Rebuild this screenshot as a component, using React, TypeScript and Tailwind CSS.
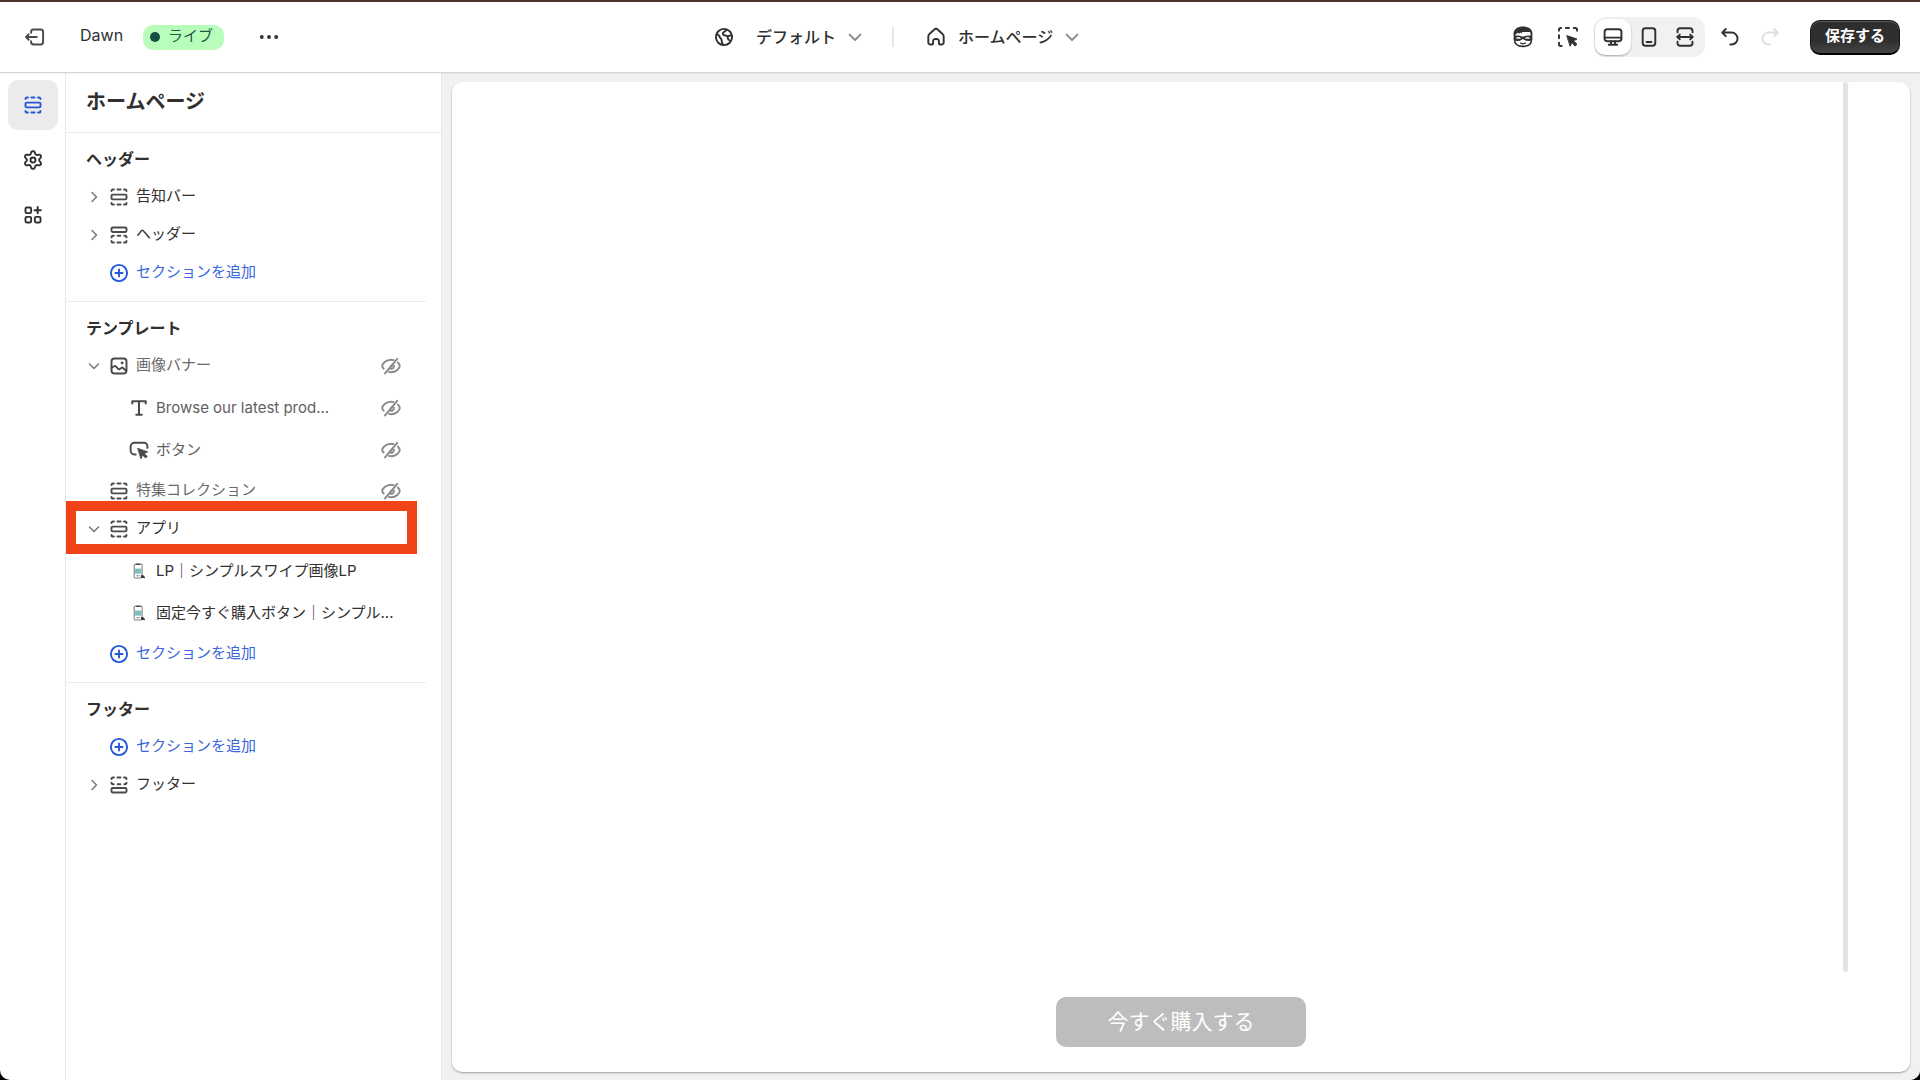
import type { ReactNode } from "react";

type IconProps = { className?: string };

function Svg({ className = "size-6", children }: { className?: string; children: ReactNode }) {
  return (
    <svg
      viewBox="0 0 20 20"
      className={className}
      fill="none"
      stroke="currentColor"
      strokeWidth="1.6"
      strokeLinecap="round"
      strokeLinejoin="round"
      aria-hidden="true"
    >
      {children}
    </svg>
  );
}

const ExitIcon = () => (
  <Svg>
    <path d="M6.75 6.5v-.75a2 2 0 0 1 2-2h6a2 2 0 0 1 2 2v8.5a2 2 0 0 1-2 2h-6a2 2 0 0 1-2-2v-.75" />
    <path d="M11.5 10H2.5M4.75 7.75 2.5 10l2.25 2.25" />
  </Svg>
);

const DotsIcon = () => (
  <Svg>
    <g fill="currentColor" stroke="none">
      <circle cx="4" cy="10" r="1.6" />
      <circle cx="10" cy="10" r="1.6" />
      <circle cx="16" cy="10" r="1.6" />
    </g>
  </Svg>
);

const GlobeIcon = () => (
  <Svg>
    <circle cx="10" cy="10" r="6.75" />
    <path d="M3.8 7.8c1.500.2 2.300 1 2.500 2 .2 1 1.500 1.400 1.600 2.400.1 1.200.300 2.600 1.200 4.200" />
    <path d="M12.500 3.900 9.700 6c-.8.700-.8 1.900.1 2.400.9.500 1.800.2 2.600.6 1 .500.6 1.500.8 2.300.2.900 1 1.300 1.700 1.700M13.300 9.300l3-.8" />
  </Svg>
);

const HomeIcon = () => (
  <Svg>
    <path d="M3.600 9.500c0-.8.300-1.500.9-2l3.900-3.600a2.300 2.300 0 0 1 3.200 0l3.900 3.600c.6.500.9 1.200.9 2v5a1.750 1.750 0 0 1-1.750 1.750h-1.300a.9.9 0 0 1-.9-.9V13.500a1.800 1.800 0 0 0-1.800-1.800h-1.300a1.800 1.800 0 0 0-1.800 1.800v1.850a.9.900 0 0 1-.9.9h-1.300A1.750 1.750 0 0 1 3.600 14.500z" />
  </Svg>
);

const ChevronDown = ({ className }: IconProps) => (
  <Svg className={className}>
    <path d="m5.500 8 4.500 4.500L14.500 8" />
  </Svg>
);

const SidekickIcon = () => (
  <Svg>
    <path d="M3 8v4.500c0 3.200 2.300 5.300 7 5.300s7-2.100 7-5.300V8" strokeWidth="1.300" />
    <path
      d="M2.300 8.600C1.300 4 5 1.200 10 1.200s8.700 2.800 7.700 7.400L16.400 8l-.5-2.200-6.400.1-1.100 1.400-.5-1.300-1.300 1.500-.6-1.300L3.800 8z"
      fill="currentColor"
      stroke="none"
    />
    <path
      d="M2.300 8.800c2.900-.3 5.500 0 7.700 1 2.200-1 4.800-1.300 7.700-1v4c-3 1.100-5.600.6-7.700-1.100-2.100 1.700-4.700 2.200-7.700 1.100z"
      fill="currentColor"
      stroke="none"
    />
    <path d="M5 10.900c.8-.4 1.600-.4 2.400 0M12.600 10.900c.8-.4 1.600-.4 2.400 0" stroke="white" strokeWidth="1.300" />
    <path d="M8 15c1.200.7 2.800.7 4 0" strokeWidth="1.200" />
  </Svg>
);

const InspectorIcon = () => (
  <Svg>
    <path d="M2.500 4.700V4c0-.9.600-1.500 1.500-1.500h.3M8.200 2.500h2.600M14.800 2.500h1.200c.9 0 1.500.6 1.500 1.500v.7M2.500 8.500V11M2.500 14.700V16c0 .9.600 1.500 1.500 1.500h.7" />
    <path d="m9.200 8.900 8.300 2.800-3 1.500 3 2.900-1.500 1.500-2.900-3-1.200 2.800z" fill="currentColor" strokeWidth=".8" />
  </Svg>
);

const DesktopIcon = () => (
  <Svg>
    <rect x="3" y="3.500" width="14" height="10" rx="2.200" />
    <path d="M3 10.500h14M8.300 13.500v2.300M11.700 13.500v2.300M6.500 16.500h7" />
  </Svg>
);

const MobileIcon = () => (
  <Svg>
    <rect x="4.750" y="2.750" width="10.500" height="14.500" rx="2.250" />
    <path d="M8 14.200h4" />
  </Svg>
);

const FullWidthIcon = () => (
  <Svg>
    <path d="M3.750 6V5A2.250 2.250 0 0 1 6 2.750h8A2.250 2.250 0 0 1 16.250 5v1M3.750 14v1A2.250 2.250 0 0 0 6 17.250h8A2.250 2.250 0 0 0 16.250 15v-1" />
    <path d="M3.500 10h13M5.700 8l-2.200 2 2.200 2M14.300 8l2.200 2-2.200 2" />
  </Svg>
);

const UndoIcon = ({ className }: IconProps) => (
  <Svg className={className}>
    <path d="M6.500 3.300 3.500 6.300l3 3M3.700 6.300h7.600a5 5 0 0 1 0 10h-1" />
  </Svg>
);

const DashedTop = () => (
  <path d="M3.750 5.100c0-.8.600-1.350 1.350-1.350h.7M8.700 3.750h2.600M14.200 3.750h.7c.8 0 1.350.55 1.350 1.350" />
);
const DashedBottom = () => (
  <path d="M3.750 14.900c0 .8.600 1.350 1.350 1.350h.7M8.700 16.250h2.600M14.200 16.250h.7c.8 0 1.350-.55 1.350-1.350" />
);

const SectionIcon = () => (
  <Svg>
    <DashedTop />
    <rect x="3.750" y="8" width="12.500" height="4" rx="1" />
    <DashedBottom />
  </Svg>
);

const HeaderIcon = () => (
  <Svg>
    <rect x="3.750" y="3.750" width="12.500" height="3.800" rx="1" />
    <path d="M3.750 12c0-.8.600-1.350 1.350-1.350h.5M8.900 10.650h2.200M14.400 10.650h.5c.8 0 1.350.55 1.350 1.350" />
    <DashedBottom />
  </Svg>
);

const FooterIcon = () => (
  <Svg>
    <DashedTop />
    <path d="M3.750 8c0 .8.600 1.350 1.350 1.350h.5M8.900 9.350h2.200M14.400 9.350h.5c.8 0 1.350-.55 1.350-1.350" />
    <rect x="3.750" y="12.450" width="12.500" height="3.800" rx="1" />
  </Svg>
);

const gearOutline =
  Array.from({ length: 120 }, (_, i) => {
    const angle = (i / 120) * 2 * Math.PI;
    const radius = 6.25 + 1.3 * Math.tanh(1.3 * Math.cos(6 * angle));
    const x = 10 + radius * Math.sin(angle);
    const y = 10 - radius * Math.cos(angle);
    return `${i === 0 ? "M" : "L"}${x.toFixed(2)} ${y.toFixed(2)}`;
  }).join("") + "Z";

const GearIcon = () => (
  <Svg>
    <circle cx="10" cy="10" r="2.100" />
    <path d={gearOutline} />
  </Svg>
);

const AppsIcon = () => (
  <Svg>
    <rect x="3.750" y="3.750" width="4.700" height="4.700" rx="1" />
    <rect x="3.750" y="11.550" width="4.700" height="4.700" rx="1" />
    <rect x="11.550" y="11.550" width="4.700" height="4.700" rx="1" />
    <path d="M13.900 3.400v5.200M11.300 6h5.200" />
  </Svg>
);

const PlusIcon = () => (
  <Svg>
    <circle cx="10" cy="10" r="6.750" />
    <path d="M10 7v6M7 10h6" />
  </Svg>
);

const ImageIcon = () => (
  <Svg>
    <rect x="3.750" y="3.750" width="12.500" height="12.500" rx="2.500" />
    <path d="m4 11.500 1.800-1.300c.5-.4 1.100-.3 1.500.1l2 2.100c.4.400 1 .4 1.400.1l1.200-.9c.5-.4 1.100-.3 1.500.1l2.500 2.200" />
    <circle cx="12.600" cy="7.400" r="1.200" fill="currentColor" stroke="none" />
  </Svg>
);

const TextIcon = () => (
  <Svg>
    <path d="M4.400 6.200V4.300h11.200v1.900M10 4.300v11.400M7.700 15.700h4.600" strokeWidth="1.700" />
  </Svg>
);

const ButtonIcon = () => (
  <Svg>
    <path d="M7.300 13.750H6.250A3.250 3.250 0 0 1 3 10.500V7.250A3.250 3.250 0 0 1 6.250 4h8A2.750 2.750 0 0 1 17 6.750v1.500" />
    <path d="m9.200 8.700 8 2.900-2.900 1.300 2.500 2.500-1.300 1.300-2.500-2.500-1.300 2.800z" fill="currentColor" strokeWidth=".8" />
  </Svg>
);

const EyeOffIcon = () => (
  <Svg>
    <path d="M15.200 4 5 16.200" />
    <path d="M3.900 12.200c-.8-.8-1.200-1.600-1.200-2.200 0-1.800 3-5.250 7.300-5.250.8 0 1.500.1 2.200.3M8.300 14.950c.6.200 1.100.3 1.700.3 4.300 0 7.300-3.450 7.300-5.250 0-.8-.6-1.900-1.600-2.900" />
    <path d="M9.400 12.300c1.700.3 3-.8 3.100-2.500M9.600 10.800l1.300-1.500" />
  </Svg>
);

const AppBlockIcon = () => (
  <svg viewBox="0 0 20 20" className="size-6" aria-hidden="true">
    <rect x="6" y="4.300" width="6.600" height="11.600" rx="1" fill="white" stroke="#7d8282" strokeWidth=".9" />
    <path d="M7.600 4.400H11" stroke="#333" strokeWidth=".9" />
    <rect x="6.700" y="8" width="5.200" height="4.200" fill="#7fbcbd" />
    <path d="M7.700 14h3" stroke="#888" strokeWidth=".8" />
    <circle cx="12.800" cy="14.600" r="1.200" fill="#26302f" />
    <path d="m13 15 1.900.5" stroke="#26302f" strokeWidth="1.300" />
  </svg>
);

function Row({
  icon,
  label,
  open,
  hidden,
  highlighted,
}: {
  icon: ReactNode;
  label: string;
  open?: boolean;
  hidden?: boolean;
  highlighted?: boolean;
}) {
  return (
    <div className="relative mr-[9px] flex h-[38px] items-center pr-3.5 pl-4">
      {open === undefined ? (
        <span className="w-6" />
      ) : (
        <button type="button" aria-label={`${label}を開閉`} aria-expanded={open} className="flex w-6 justify-center text-[#7c7c7c]">
          <ChevronDown className={open ? "size-5" : "size-5 -rotate-90"} />
        </button>
      )}
      <button type="button" className="ml-px flex flex-1 items-center gap-[5px] text-left">
        <span className="text-[#4a4a4a]">{icon}</span>
        <span className={hidden ? "pb-0.5 text-[#6a6a6a]" : "pb-0.5 text-[#303030]"}>{label}</span>
      </button>
      {hidden && <HiddenToggle label={label} />}
      {highlighted && <div className="pointer-events-none absolute inset-x-0 -top-[9px] -bottom-[6px] border-10 border-[#f04318]" />}
    </div>
  );
}

function Child({ icon, label, hidden }: { icon: ReactNode; label: string; hidden?: boolean }) {
  return (
    <div className="mr-[9px] flex h-[42px] items-center pr-3.5 pl-[61px]">
      <button type="button" className="flex flex-1 items-center gap-[5px] text-left whitespace-nowrap">
        <span className="text-[#4a4a4a]">{icon}</span>
        <span className={hidden ? "text-[#616161]" : "text-[#303030]"}>{label}</span>
      </button>
      {hidden && <HiddenToggle label={label} />}
    </div>
  );
}

function HiddenToggle({ label }: { label: string }) {
  return (
    <button type="button" aria-label={`${label}を表示`} className="text-[#8a8a8a]">
      <EyeOffIcon />
    </button>
  );
}

function AddSection() {
  return (
    <button type="button" className="flex h-[38px] items-center gap-[5px] pl-[41px] text-[#2558d8]">
      <PlusIcon />
      <span className="pb-0.5 text-[#3a66dc]">セクションを追加</span>
    </button>
  );
}

function Group({ title, last, children }: { title: string; last?: boolean; children: ReactNode }) {
  return (
    <section className={last ? "mr-[15px] pt-2" : "mr-[15px] border-b border-[#ebebeb] pt-2 pb-[9px]"}>
      <h3 className="mb-px flex h-9 items-center pl-5 text-base font-bold">{title}</h3>
      {children}
    </section>
  );
}

function TopBar() {
  return (
    <header className="z-10 flex h-[73px] items-center justify-between border-t-2 border-b border-t-[#52342f] border-b-[#d6d6d6] bg-white pr-5 pl-[23px] shadow-[0_1px_2px_rgba(0,0,0,0.06)]">
      <div className="flex items-center">
        <button type="button" aria-label="終了" className="text-[#4a4a4a]">
          <ExitIcon />
        </button>
        <span className="ml-[33px] pb-1 text-base">Dawn</span>
        <span className="ml-5 flex h-[25px] items-center gap-2 rounded-[10px] bg-[#b9fdbb] pr-[11px] pl-[7px] text-[#1c5a47]">
          <span className="size-2.5 rounded-full bg-[#144f40]" />
          <span className="pb-0.5">ライブ</span>
        </span>
        <button type="button" aria-label="その他" className="ml-[33px]">
          <DotsIcon />
        </button>
      </div>

      <div className="flex items-center pl-1 text-base font-medium">
        <button type="button" aria-label="マーケット">
          <GlobeIcon />
        </button>
        <button type="button" className="ml-5 flex items-center gap-[7px]">
          デフォルト
          <span className="text-[#8a8a8a]">
            <ChevronDown className="size-6" />
          </span>
        </button>
        <span className="ml-[25px] h-5 w-0.5 bg-[#e6e6e6]" />
        <button type="button" className="ml-[30px] flex items-center">
          <HomeIcon />
          <span className="ml-2.5">ホームページ</span>
          <span className="ml-[7px] text-[#8a8a8a]">
            <ChevronDown className="size-6" />
          </span>
        </button>
      </div>

      <div className="flex items-center">
        <button type="button" aria-label="アシスタント">
          <SidekickIcon />
        </button>
        <button type="button" aria-label="インスペクター" className="ml-[21px]">
          <InspectorIcon />
        </button>
        <div className="ml-3.5 flex h-10 items-center rounded-xl bg-[#f1f1f1] pr-0.5 pl-px">
          <button
            type="button"
            aria-label="デスクトップ"
            className="flex size-9 items-center justify-center rounded-[10px] bg-white shadow-[0_1px_2px_rgba(0,0,0,0.3)]"
          >
            <DesktopIcon />
          </button>
          <button type="button" aria-label="モバイル" className="flex size-9 items-center justify-center">
            <MobileIcon />
          </button>
          <button type="button" aria-label="全幅" className="flex size-9 items-center justify-center">
            <FullWidthIcon />
          </button>
        </div>
        <button type="button" aria-label="元に戻す" className="ml-[13px]">
          <UndoIcon className="size-6" />
        </button>
        <button type="button" aria-label="やり直す" disabled className="ml-4 text-[#dedede]">
          <UndoIcon className="size-6 -scale-x-100" />
        </button>
        <button
          type="button"
          className="ml-7 flex h-[35px] items-center rounded-[10px] border border-b-2 border-[#1a1a1a] border-b-black bg-linear-to-b from-[#2e2e2e] from-60% to-[#454545] px-3.5 text-[15px] font-bold text-white shadow-[inset_0_1px_0_#5c5c5c]"
        >
          保存する
        </button>
      </div>
    </header>
  );
}

function Rail() {
  return (
    <nav className="flex w-[66px] shrink-0 flex-col items-start gap-[5px] border-r border-[#ebebeb] pt-[7px] pl-2">
      <button type="button" aria-label="セクション" className="flex size-[50px] items-center justify-center rounded-[10px] bg-[#ebebeb] text-[#2558d8]">
        <SectionIcon />
      </button>
      <button type="button" aria-label="テーマ設定" className="flex size-[50px] items-center justify-center">
        <GearIcon />
      </button>
      <button type="button" aria-label="アプリ埋め込み" className="flex size-[50px] items-center justify-center">
        <AppsIcon />
      </button>
    </nav>
  );
}

function Sidebar() {
  return (
    <aside className="w-[376px] shrink-0 border-r border-[#e6e6e6]">
      <h2 className="flex h-[60px] items-center border-b border-[#ebebeb] pb-0.5 pl-5 text-xl font-bold">ホームページ</h2>
      <Group title="ヘッダー">
        <Row icon={<SectionIcon />} label="告知バー" open={false} />
        <Row icon={<HeaderIcon />} label="ヘッダー" open={false} />
        <AddSection />
      </Group>
      <Group title="テンプレート">
        <Row icon={<ImageIcon />} label="画像バナー" open hidden />
        <div className="pt-[2px] pb-px">
          <Child icon={<TextIcon />} label="Browse our latest prod..." hidden />
          <Child icon={<ButtonIcon />} label="ボタン" hidden />
        </div>
        <Row icon={<SectionIcon />} label="特集コレクション" hidden />
        <Row icon={<SectionIcon />} label="アプリ" open highlighted />
        <div className="pt-[2px] pb-px">
          <Child icon={<AppBlockIcon />} label="LP｜シンプルスワイプ画像LP" />
          <Child icon={<AppBlockIcon />} label="固定今すぐ購入ボタン｜シンプル..." />
        </div>
        <AddSection />
      </Group>
      <Group title="フッター" last>
        <AddSection />
        <Row icon={<FooterIcon />} label="フッター" open={false} />
      </Group>
    </aside>
  );
}

function Preview() {
  return (
    <main className="flex flex-1 bg-[#f1f1f1] pt-[9px] pr-2.5 pb-2 pl-2.5">
      <div className="flex flex-1 flex-col rounded-[10px] bg-white shadow-[0_1px_2px_rgba(0,0,0,0.35)]">
        <div className="flex flex-1 justify-end pr-[62px]">
          <div className="w-[5px] rounded-full bg-[#e3e3e3]" />
        </div>
        <div className="flex justify-center py-[25px]">
          <button type="button" className="h-[50px] w-[250px] rounded-[10px] bg-[#bdbdbd] text-[21px] text-white">
            今すぐ購入する
          </button>
        </div>
      </div>
    </main>
  );
}

export default function App() {
  return (
    <div className="bg-black">
      <div className="flex min-h-screen flex-col overflow-hidden rounded-b-[10px] bg-white font-[Inter,'Noto_Sans_CJK_JP',sans-serif] text-[15px] text-[#303030]">
        <TopBar />
        <div className="flex flex-1">
          <Rail />
          <Sidebar />
          <Preview />
        </div>
      </div>
    </div>
  );
}
